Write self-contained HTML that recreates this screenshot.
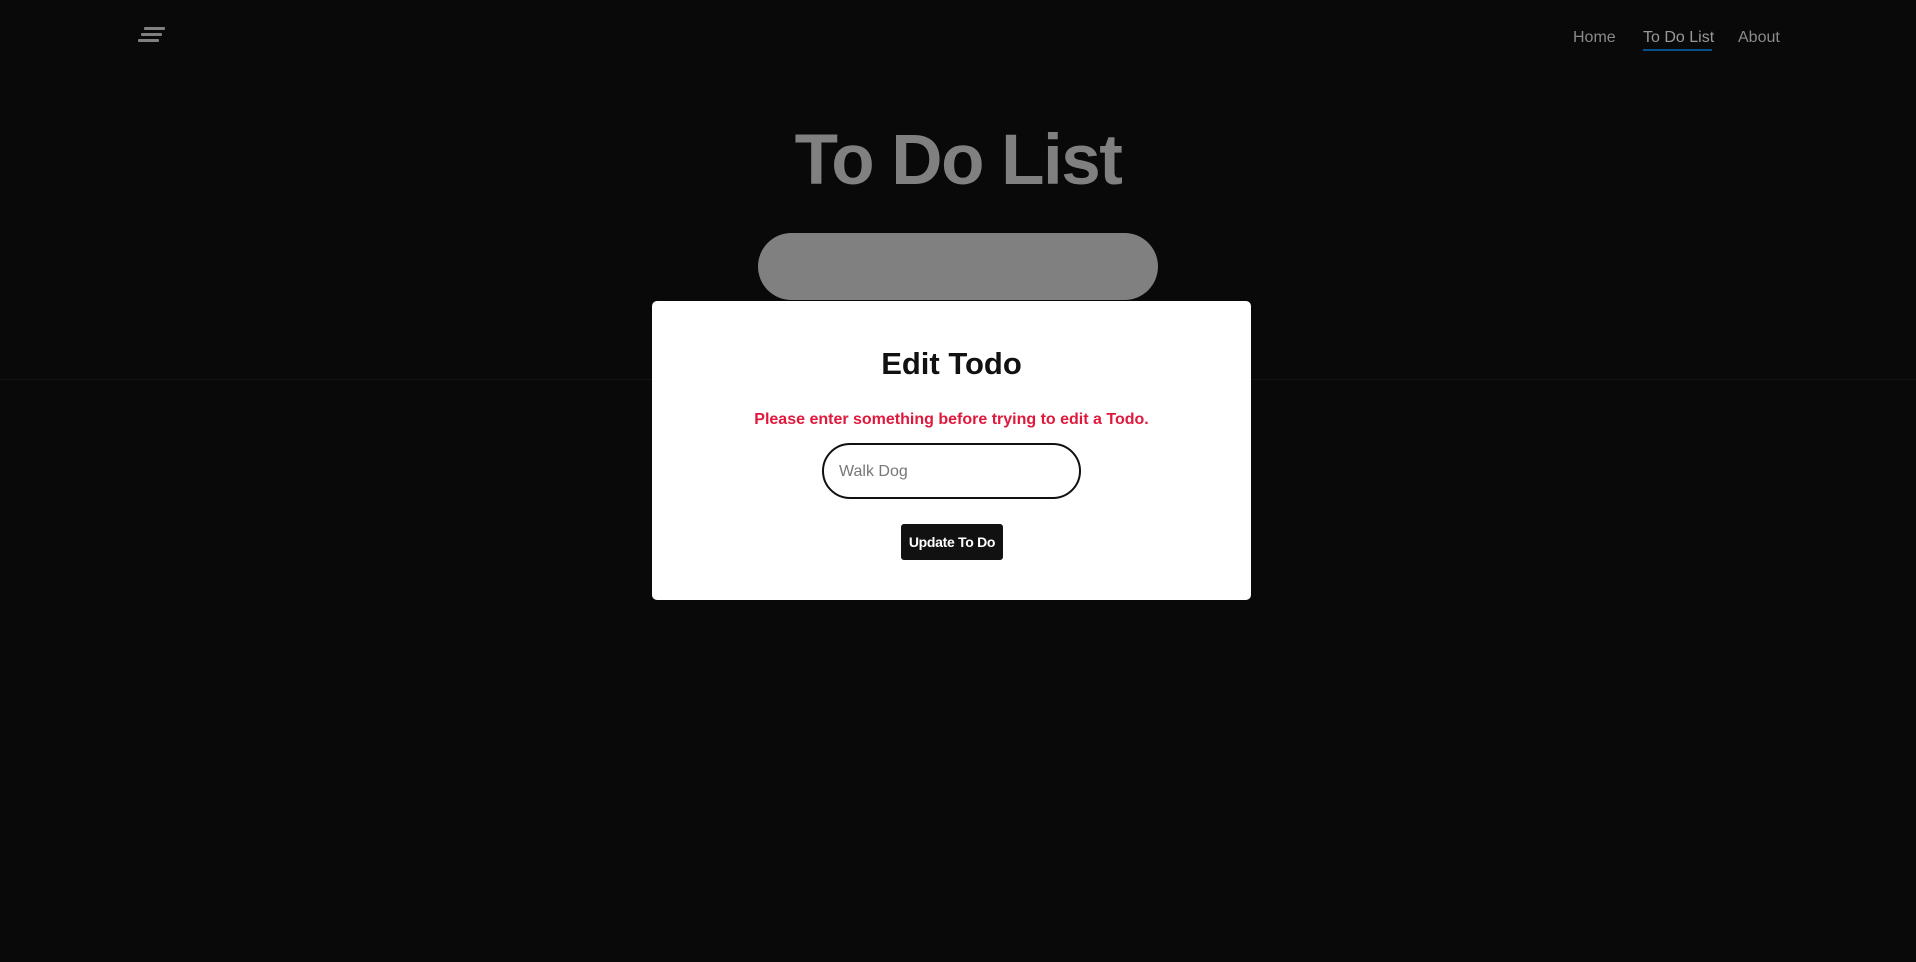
<!DOCTYPE html>
<html><head><meta charset="utf-8"><style>
*{margin:0;padding:0;box-sizing:border-box}
body{width:1916px;height:962px;background:#090909;font-family:"Liberation Sans",sans-serif;position:relative;overflow:hidden}
.ham{position:absolute;left:138px;height:3px;background:#808080;border-radius:1px}
.nav{position:absolute;top:29px;font-size:16px;color:#8a8a8a}
h1{position:absolute;left:0;width:1916px;top:116px;text-align:center;font-size:71px;font-weight:bold;color:#808080;letter-spacing:-1.5px;line-height:90px}
.pill{position:absolute;left:758px;top:233px;width:400px;height:67px;border-radius:34px;background:#808080}
.line{position:absolute;left:0;top:379px;width:1916px;height:1px;background:#141414}
.modal{position:absolute;left:652px;top:301px;width:599px;height:299px;background:#fff;border-radius:5px}
.modal h2{position:absolute;top:45px;width:100%;text-align:center;font-size:31px;font-weight:bold;color:#111}
.err{position:absolute;top:110px;width:100%;text-align:center;font-size:16px;font-weight:bold;color:#e0193c}
.inp{position:absolute;left:170px;top:142px;width:259px;height:56px;border:2px solid #111;border-radius:28px;font-size:16px;color:#777;padding:18px 0 0 15px}
.btn{position:absolute;left:249px;top:223px;width:102px;height:36px;background:#111;border-radius:3px;color:#fff;font-size:14px;font-weight:bold;text-align:center;line-height:36px;letter-spacing:-0.3px;white-space:nowrap}
</style></head><body>
<div class="ham" style="top:27px;left:144px;width:21px"></div>
<div class="ham" style="top:33px;left:141px;width:21px"></div>
<div class="ham" style="top:39px;left:138px;width:21px"></div>
<div class="nav" style="left:1573px">Home</div>
<div class="nav" style="left:1643px;color:#999">To Do List</div>
<div style="position:absolute;left:1643px;top:49px;width:69px;height:2px;background:#0a4f8a"></div>
<div class="nav" style="left:1738px">About</div>
<h1>To Do List</h1>
<div class="pill"></div>
<div class="line"></div>
<div class="modal">
<h2>Edit Todo</h2>
<div class="err">Please enter something before trying to edit a Todo.</div>
<div class="inp">Walk Dog</div>
<div class="btn">Update To Do</div>
</div>
</body></html>
